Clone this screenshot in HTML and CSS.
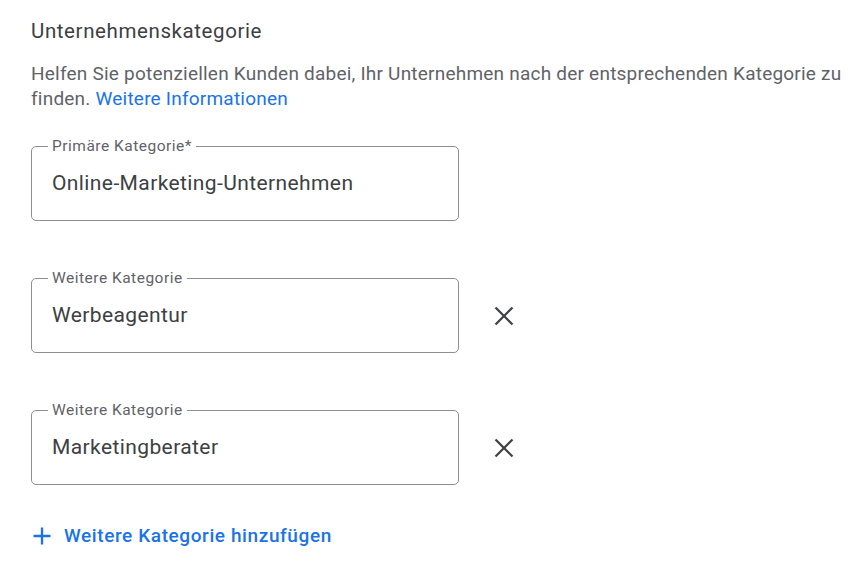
FILE: index.html
```html
<!DOCTYPE html>
<html lang="de">
<head>
<meta charset="utf-8">
<link rel="stylesheet" href="styles.css">
</head>
<body>
<main class="section">
  <h2 class="title">Unternehmenskategorie</h2>
  <p class="desc">Helfen Sie potenziellen Kunden dabei, Ihr Unternehmen nach der entsprechenden Kategorie zu finden. <a class="link" href="#">Weitere Informationen</a></p>

  <div class="fields">
    <div class="row">
      <fieldset class="field">
        <legend>Primäre Kategorie*</legend>
        <div class="value">Online-Marketing-Unternehmen</div>
      </fieldset>
    </div>
    <div class="row">
      <fieldset class="field">
        <legend>Weitere Kategorie</legend>
        <div class="value">Werbeagentur</div>
      </fieldset>
      <button class="remove" aria-label="Entfernen">
        <svg width="22" height="22" viewBox="0 0 22 22"><path d="M2.5 2.5 L19.5 19.5 M19.5 2.5 L2.5 19.5" stroke="#3c4043" stroke-width="2.2" fill="none"/></svg>
      </button>
    </div>
    <div class="row">
      <fieldset class="field">
        <legend>Weitere Kategorie</legend>
        <div class="value">Marketingberater</div>
      </fieldset>
      <button class="remove" aria-label="Entfernen">
        <svg width="22" height="22" viewBox="0 0 22 22"><path d="M2.5 2.5 L19.5 19.5 M19.5 2.5 L2.5 19.5" stroke="#3c4043" stroke-width="2.2" fill="none"/></svg>
      </button>
    </div>
  </div>

  <button class="add">
    <svg width="18" height="18" viewBox="0 0 18 18"><path d="M9 0.5 V17.5 M0.5 9 H17.5" stroke="#1a73e8" stroke-width="2.3" fill="none"/></svg>
    <span>Weitere Kategorie hinzufügen</span>
  </button>
</main>
</body>
</html>
```
FILE: styles.css
```css
* { box-sizing: border-box; }
html, body { margin: 0; background: #fff; }
body { font-family: Roboto, "Noto Sans", Arial, sans-serif; }

.section {
  padding: 19px 0 0 31px;
  width: 857px;
}

.title {
  margin: 0;
  font-size: 20.5px;
  line-height: 24px;
  font-weight: 400;
  letter-spacing: 0.6px;
  color: #3c4043;
}

.desc {
  margin: 18px 0 0;
  font-size: 19px;
  line-height: 25px;
  letter-spacing: 0.22px;
  color: #5f6368;
}

.link {
  color: #1a73e8;
  text-decoration: none;
}

.fields {
  margin-top: 27px;
  display: flex;
  flex-direction: column;
  gap: 49px;
}

.row {
  display: flex;
  align-items: flex-end;
}

.field {
  margin: 0;
  width: 428px;
  border: 1px solid #8c8f93;
  border-radius: 5px;
  padding: 0 20px;
  min-width: 0;
}

.field legend {
  margin-left: -4px;
  padding: 0 4px;
  font-size: 15.5px;
  line-height: 16px;
  letter-spacing: 0.5px;
  color: #5f6368;
}

.value {
  padding: 16px 0 24px;
  font-size: 21px;
  line-height: 26px;
  letter-spacing: 0.4px;
  color: #3c4043;
}

.remove {
  margin: 0 0 26px 34px;
  padding: 0;
  border: 0;
  background: none;
  width: 22px;
  height: 22px;
  display: flex;
  align-items: center;
  justify-content: center;
}

.add {
  margin-top: 39px;
  padding: 0 0 0 2px;
  border: 0;
  background: none;
  display: flex;
  align-items: center;
  gap: 13px;
  font-family: inherit;
  font-size: 19px;
  line-height: 24px;
  font-weight: 500;
  letter-spacing: 0.6px;
  color: #1a73e8;
}
```
